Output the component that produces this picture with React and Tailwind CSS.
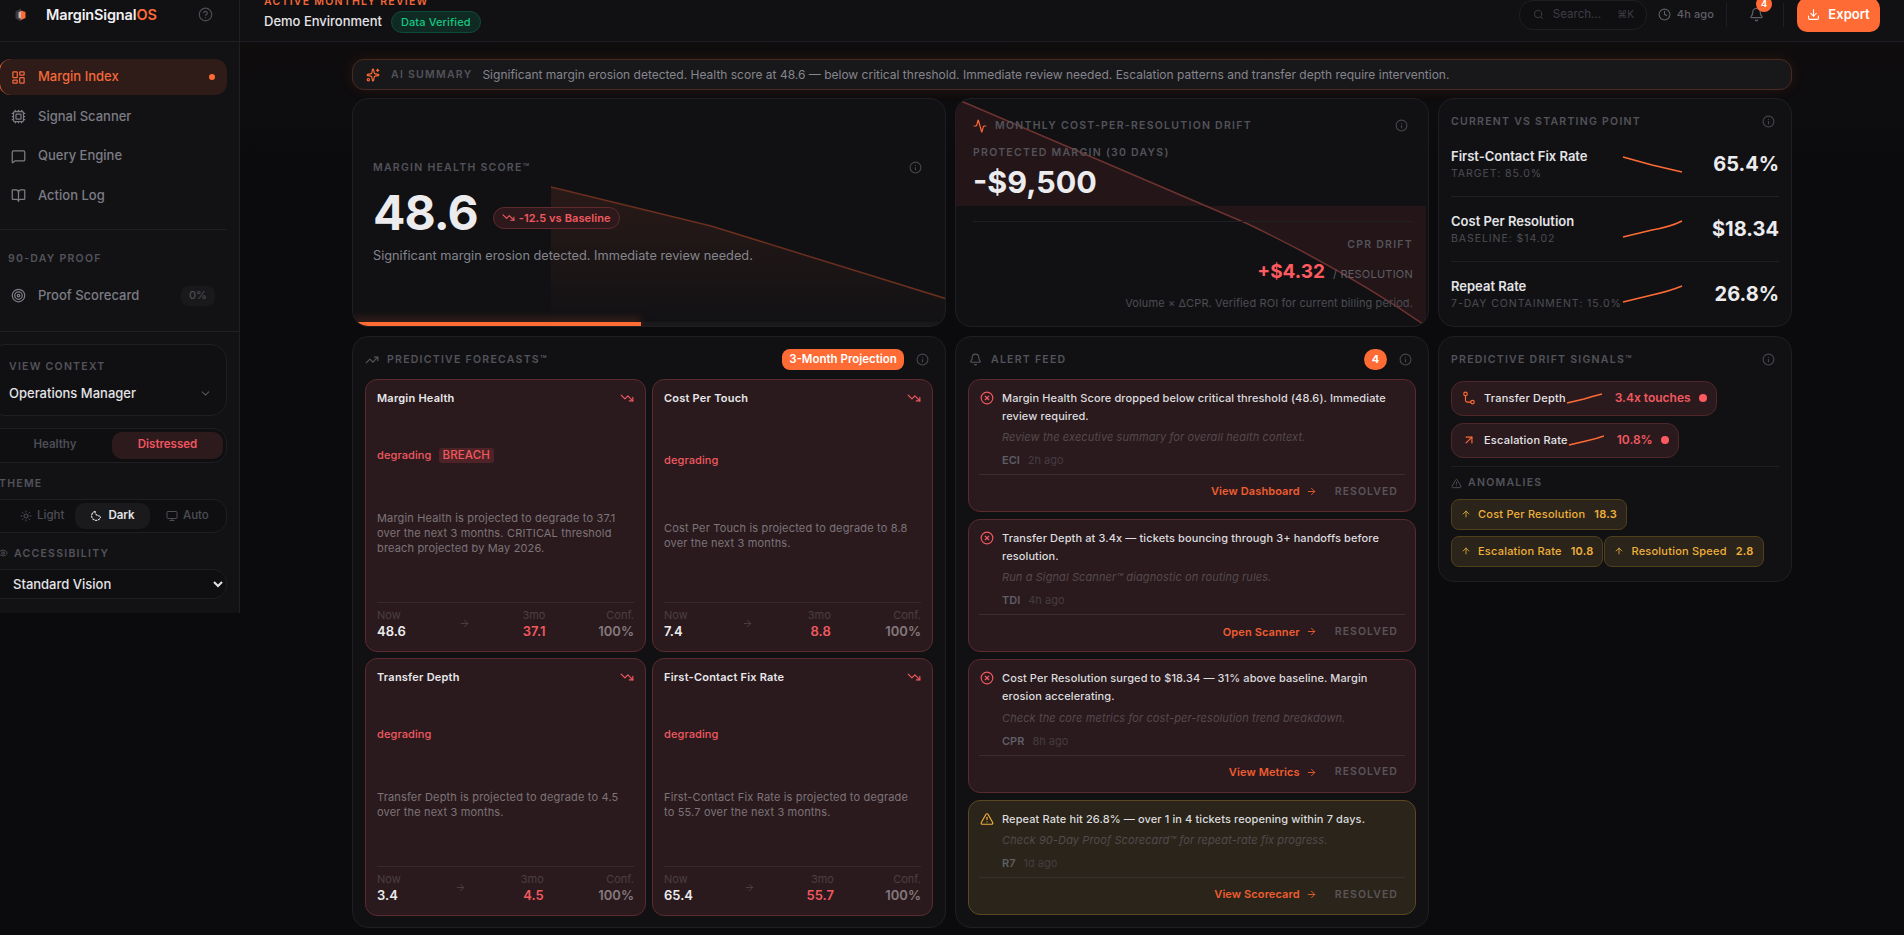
import {
  Activity, AlertTriangle, ArrowRight, ArrowUp, ArrowUpRight, Bell, BookOpen, ChevronDown, CircleHelp,
  Clock, Cpu, Download, Eye, Info, LayoutDashboard, MessageSquare, Monitor, Search, Sparkles, Sun,
  Target, TrendingDown, TrendingUp, XCircle,
} from 'lucide-react';

const forecasts = [
  { title: 'Margin Health', breach: true, desc: 'Margin Health is projected to degrade to 37.1 over the next 3 months. CRITICAL threshold breach projected by May 2026.', now: '48.6', next: '37.1' },
  { title: 'Cost Per Touch', desc: 'Cost Per Touch is projected to degrade to 8.8 over the next 3 months.', now: '7.4', next: '8.8' },
  { title: 'Transfer Depth', desc: 'Transfer Depth is projected to degrade to 4.5 over the next 3 months.', now: '3.4', next: '4.5' },
  { title: 'First-Contact Fix Rate', desc: 'First-Contact Fix Rate is projected to degrade to 55.7 over the next 3 months.', now: '65.4', next: '55.7' },
];

const alerts = [
  { text: 'Margin Health Score dropped below critical threshold (48.6). Immediate review required.', hint: 'Review the executive summary for overall health context.', code: 'ECI', time: '2h ago', action: 'View Dashboard' },
  { text: 'Transfer Depth at 3.4x — tickets bouncing through 3+ handoffs before resolution.', hint: 'Run a Signal Scanner™ diagnostic on routing rules.', code: 'TDI', time: '4h ago', action: 'Open Scanner' },
  { text: 'Cost Per Resolution surged to $18.34 — 31% above baseline. Margin erosion accelerating.', hint: 'Check the core metrics for cost-per-resolution trend breakdown.', code: 'CPR', time: '8h ago', action: 'View Metrics' },
  { text: 'Repeat Rate hit 26.8% — over 1 in 4 tickets reopening within 7 days.', hint: 'Check 90-Day Proof Scorecard™ for repeat-rate fix progress.', code: 'R7', time: '1d ago', action: 'View Scorecard', warn: true },
];

const metrics = [
  { name: 'First-Contact Fix Rate', sub: 'Target: 85.0%', value: '65.4%', path: 'M1 2 L30 10 L60 17' },
  { name: 'Cost Per Resolution', sub: 'Baseline: $14.02', value: '$18.34', path: 'M1 17 L30 10 Q48 7 60 1' },
  { name: 'Repeat Rate', sub: '7-Day Containment: 15.0%', value: '26.8%', path: 'M1 17 L30 10 Q48 6 60 1' },
];

const Label = ({ children, className = '' }) => (
  <div className={`text-[10.5px] font-semibold uppercase tracking-[0.12em] text-[#53535a] ${className}`}>{children}</div>
);

const InfoIcon = () => <Info size={13} className="text-[#46464c] shrink-0" />;

const Logo = () => (
  <svg width="14" height="14" viewBox="0 0 14 14">
    <path d="M7 0.5 L1.5 3.5 V10.5 L7 13.5 Z" fill="#3a3a40" />
    <path d="M7 2.5 L11.5 4 V10 L7 12 Z" fill="#ff6b35" />
    <path d="M7 3 L4.5 4.5 V9.5 L7 11 Z" fill="#f2f2f2" opacity="0.7" />
  </svg>
);

const DarkIcon = () => (
  <svg width="12" height="12" viewBox="0 0 24 24" fill="none" stroke="#e4e4e7" strokeWidth="2.2" strokeLinecap="round">
    <path d="M10 3a9 9 0 1 0 11 11" strokeDasharray="3 3" />
    <path d="M10 3c0 5 4 9 9 9" strokeDasharray="3 3" />
  </svg>
);

const RouteIcon = () => (
  <svg width="14" height="14" viewBox="0 0 24 24" fill="none" stroke="#ff6b35" strokeWidth="2" strokeLinecap="round">
    <circle cx="6" cy="5" r="3" />
    <path d="M6 8v8a3 3 0 0 0 3 3h6" />
    <circle cx="18" cy="19" r="3" />
  </svg>
);

const NavItem = ({ icon: Icon, label, active }) => (
  <div className={`flex items-center h-9 pr-[12px] rounded-xl text-[13px] font-medium ${active ? 'pl-[11px] bg-[#2f1c18] text-[#f4683a] border-l border-[#f4683a]' : 'pl-[12px] text-[#7c7c84]'}`}>
    <Icon size={15} className="shrink-0" />
    <span className="ml-[12px]">{label}</span>
    {active && <span className="ml-auto w-[6px] h-[6px] rounded-full bg-[#ff6b35]" />}
  </div>
);

const Sidebar = () => (
  <aside className="w-[240px] h-[571px] shrink-0 bg-[#121215] border-r border-[#202024] pt-[17px]">
    <div className="-ml-px mr-[12px] flex flex-col gap-[3.5px]">
      <NavItem icon={LayoutDashboard} label="Margin Index" active />
      <NavItem icon={Cpu} label="Signal Scanner" />
      <NavItem icon={MessageSquare} label="Query Engine" />
      <NavItem icon={BookOpen} label="Action Log" />
    </div>
    <div className="mt-[15px] mr-[12px] border-t border-[#202024]" />
    <Label className="mt-[22px] ml-[8px] leading-[13px]">90-Day Proof</Label>
    <div className="mt-[13px] mr-[12px] flex items-center h-9 pl-[11px] pr-[12px] text-[13px] font-medium text-[#7c7c84]">
      <Target size={15} />
      <span className="ml-[12px]">Proof Scorecard</span>
      <span className="ml-auto w-[34px] h-5 flex items-center justify-center rounded-lg bg-[#19191c] text-[11px] text-[#4d4d53]">0%</span>
    </div>
    <div className="mt-[17px] border-t border-[#202024]" />
    <div className="mt-[12px] -ml-[12px] mr-[12px] flex flex-col">
      <div className="h-[72px] rounded-2xl border border-[#1f1f23] bg-[#101013] pl-[20px] pr-[14px] pt-[15px]">
        <Label className="leading-[13px]">View Context</Label>
        <div className="mt-[11px] flex items-center justify-between text-[13px] font-medium text-[#e4e4e7]">
          Operations Manager
          <ChevronDown size={13} className="text-[#55555c]" />
        </div>
      </div>
      <div className="mt-[12px] h-[35px] rounded-[14px] border border-[#1f1f23] bg-[#0f0f12] p-[3px] pl-[9px] flex text-[11.5px] font-semibold">
        <div className="w-[114px] flex items-center justify-center text-[#4d4d54]">Healthy</div>
        <div className="flex-1 flex items-center justify-center rounded-[10px] bg-[#2d1a1c] text-[#ef5560]">Distressed</div>
      </div>
      <Label className="mt-[14px] ml-[11px] leading-[13px]">Theme</Label>
      <div className="mt-[9px] h-[34px] rounded-[14px] border border-[#1f1f23] bg-[#0f0f12] p-[3px] pl-[12px] flex text-[11.5px] font-medium text-[#4d4d54]">
        <div className="w-[74px] pl-[19px] flex items-center gap-[5px]"><Sun size={12} />Light</div>
        <div className="w-[75px] flex items-center justify-center gap-[6px] rounded-[10px] bg-[#1a1a1d] text-[#e4e4e7] font-semibold"><DarkIcon />Dark</div>
        <div className="flex-1 pl-[16px] flex items-center gap-[5px]"><Monitor size={12} />Auto</div>
      </div>
      <div className="mt-[14px] ml-[10px] flex items-center gap-[6px] h-[13px]">
        <Eye size={10} className="text-[#53535a]" />
        <Label className="leading-[13px]">Accessibility</Label>
      </div>
      <select className="mt-[9px] h-[30px] w-full rounded-[14px] border border-[#1f1f23] bg-[#0f0f12] pl-[20px] text-[13px] font-medium text-[#e4e4e7] outline-none">
        <option>Standard Vision</option>
      </select>
    </div>
  </aside>
);

const Header = () => (
  <header className="h-[42px] shrink-0 flex bg-[#111114] border-b border-[#202024]">
    <div className="w-[240px] shrink-0 border-r border-[#202024] flex items-center pb-[12px] pl-[14px] pr-[26px]">
      <Logo />
      <div className="ml-[18px] text-[14.5px] font-semibold tracking-[-0.01em] text-[#f0f0f2]">MarginSignal<span className="text-[#ff6b35]">OS</span></div>
      <CircleHelp size={15} className="ml-auto text-[#4d4d53]" />
    </div>
    <div className="-mt-[5px] ml-[24px]">
      <div className="text-[10.5px] leading-[14px] font-semibold uppercase tracking-[0.12em] text-[#f4683a]">Active Monthly Review</div>
      <div className="mt-[2px] flex items-center gap-[9px]">
        <span className="text-[13px] font-medium text-[#e4e4e7]">Demo Environment</span>
        <span className="h-[22px] px-[9px] flex items-center rounded-full border border-[#0f4a38] bg-[#0e2a22] text-[11px] tracking-[0.01em] font-medium text-[#16c784]">Data Verified</span>
      </div>
    </div>
    <div className="ml-auto flex items-center pb-[12px] pr-[24px]">
      <div className="w-[128px] h-[30px] flex items-center rounded-[14px] border border-[#1f1f23] bg-[#0f0f12] pl-[13px] pr-[12px] text-[11.5px] text-[#3e3e44]">
        <Search size={11} />
        <span className="ml-[9px]">Search...</span>
        <span className="ml-auto text-[10px]">⌘K</span>
      </div>
      <Clock size={13} className="ml-[11px] text-[#5e5e65]" />
      <span className="ml-[6px] text-[11px] tracking-[0.01em] font-medium text-[#5e5e65]">4h ago</span>
      <div className="ml-[12px] w-px h-[24px] bg-[#202024]" />
      <div className="relative ml-[22px]">
        <Bell size={15} className="text-[#5e5e65]" />
        <span className="absolute -top-[11px] left-[7px] w-4 h-4 flex items-center justify-center rounded-full bg-[#ff6b35] text-[9px] font-bold text-white">4</span>
      </div>
      <div className="ml-[19px] w-px h-[24px] bg-[#202024]" />
      <button className="ml-[13px] w-[83px] h-[34px] flex items-center justify-center gap-[8px] rounded-[10px] bg-[#ff6b35] text-[13px] font-semibold text-white">
        <Download size={13} />Export
      </button>
    </div>
  </header>
);

const HealthCard = () => (
  <section className="relative h-[229px] overflow-hidden rounded-2xl border border-[#1f1f23] bg-[#111114] px-[20px] flex flex-col justify-center">
    <svg className="absolute inset-0" width="594" height="229" fill="none">
      <defs>
        <linearGradient id="healthFill" x1="0" y1="0" x2="0" y2="1">
          <stop offset="0" stopColor="#ff6b35" stopOpacity="0.1" />
          <stop offset="1" stopColor="#ff6b35" stopOpacity="0" />
        </linearGradient>
      </defs>
      <path d="M198 88 L358 127 L594 200 V229 H198 Z" fill="url(#healthFill)" />
      <path d="M198 88 L358 127 L594 200" stroke="#6a2f1e" strokeWidth="1.5" />
    </svg>
    <div className="relative">
      <div className="flex items-center justify-between">
        <Label>Margin Health Score™</Label>
        <span className="mr-[3px]"><InfoIcon /></span>
      </div>
      <div className="mt-[9px] flex items-center">
        <span className="text-[48px] leading-[58px] font-bold tracking-[-0.02em] text-[#ececee]">48.6</span>
        <span className="ml-[15px] mt-[9px] h-[22px] px-[8px] flex items-center gap-[4px] rounded-full border border-[#5e2a2e] bg-[#2d191c] text-[11px] tracking-[0.01em] font-semibold text-[#f2595f]">
          <TrendingDown size={13} />-12.5 vs Baseline
        </span>
      </div>
      <p className="mt-[4px] text-[12.75px] text-[#85858c]">Significant margin erosion detected. Immediate review needed.</p>
    </div>
    <div className="absolute left-0 right-0 bottom-0 h-[4px] bg-[#19191c]">
      <div className="w-[288px] h-full bg-[#ff6b35] shadow-[0_-2px_10px_rgba(255,107,53,0.35)]" />
    </div>
  </section>
);

const DriftCard = () => (
  <section className="relative h-[229px] overflow-hidden rounded-2xl border border-[#1f1f23] bg-[#111114] pl-[17px] pr-[15px] pt-[19px]">
    <svg className="absolute inset-0" width="474" height="229" fill="none">
      <path d="M5 2 L145 62 L292 125 Q390 172 470 227 V107 H0 V2 Z" fill="#ff4d4d" fillOpacity="0.08" />
      <path d="M5 2 L145 62 L292 125 Q390 172 470 227" stroke="#6e3230" strokeWidth="1.5" />
    </svg>
    <div className="relative">
      <div className="flex items-center">
        <Activity size={14} className="text-[#ff6b35]" />
        <Label className="ml-[8px]">Monthly Cost-Per-Resolution Drift</Label>
        <span className="ml-auto mr-[5px]"><InfoIcon /></span>
      </div>
      <Label className="mt-[12px] leading-[14px]">Protected Margin (30 Days)</Label>
      <div className="mt-[2px] text-[30.5px] leading-[40px] font-bold text-[#ececee]">-$9,500</div>
      <div className="mt-[19px] border-t border-[#202024] pt-[16px] flex flex-col items-end">
        <Label className="leading-[14px]">CPR Drift</Label>
        <div className="mt-[6px] flex items-baseline gap-[8px]">
          <span className="text-[19px] leading-[28px] font-bold text-[#ff5a5f]">+$4.32</span>
          <span className="text-[11px] tracking-[0.02em] text-[#5e5e65]">/ RESOLUTION</span>
        </div>
        <p className="mt-[9px] text-[11px] tracking-[0.01em] text-[#4d4d53]">Volume × ΔCPR. Verified ROI for current billing period.</p>
      </div>
    </div>
  </section>
);

const CurrentCard = () => (
  <section className="h-[229px] rounded-2xl border border-[#1f1f23] bg-[#111114] pl-[12px] pr-[12px] pt-[15px]">
    <div className="flex items-center justify-between pr-[4px]">
      <Label>Current vs Starting Point</Label>
      <InfoIcon />
    </div>
    <div className="mt-[2px] flex flex-col">
      {metrics.map((m, i) => (
        <div key={m.name} className={`relative h-[65px] flex items-center justify-between ${i < 2 ? 'border-b border-[#202024]' : ''}`}>
          <div>
            <div className="text-[13px] leading-[18px] font-semibold text-[#e4e4e7]">{m.name}</div>
            <div className="mt-[2px] text-[10.5px] leading-[14px] uppercase tracking-[0.09em] text-[#4d4d53]">{m.sub}</div>
          </div>
          <svg className="absolute left-[171px] top-[23px]" width="61" height="18" fill="none">
            <path d={m.path} stroke="#ff6b35" strokeWidth="1.5" />
          </svg>
          <div className="text-[20px] font-bold text-[#ececee]">{m.value}</div>
        </div>
      ))}
    </div>
  </section>
);

const ForecastCard = ({ f }) => (
  <div className="rounded-xl border border-[#5a2a2e] bg-[#2a1a1e] px-[11px] pt-[10px] pb-[11px] flex flex-col justify-between">
    <div className="flex items-center justify-between h-[16px]">
      <span className="text-[11px] tracking-[0.02em] font-semibold text-[#e8e8ea]">{f.title}</span>
      <TrendingDown size={14} className="text-[#f2595f]" />
    </div>
    <div className="-mt-[4px] mb-[2px] flex items-center gap-[7px] h-[16px] text-[11px] tracking-[0.01em] font-medium text-[#f2595f]">
      degrading
      {f.breach && <span className="h-[15px] px-[4px] flex items-center rounded-[3px] bg-[#4d2327] text-[11.5px]">BREACH</span>}
    </div>
    <p className="text-[11px] tracking-[0.015em] leading-[15px] text-[#7d7478]">{f.desc}</p>
    <div className="border-t border-[#3b282c] pt-[5px] flex items-center justify-between">
      <div>
        <div className="text-[11px] leading-[14px] text-[#4b3f43]">Now</div>
        <div className="text-[13px] leading-[18px] font-semibold text-[#ececee]">{f.now}</div>
      </div>
      <ArrowRight size={11} className="text-[#4b3f43]" />
      <div className="text-right">
        <div className="text-[11px] leading-[14px] text-[#4b3f43]">3mo</div>
        <div className="text-[13px] leading-[18px] font-semibold text-[#f2595f]">{f.next}</div>
      </div>
      <div className="text-right">
        <div className="text-[11px] leading-[14px] text-[#4b3f43]">Conf.</div>
        <div className="text-[13px] leading-[18px] font-semibold text-[#85797d]">100%</div>
      </div>
    </div>
  </div>
);

const ForecastPanel = () => (
  <section className="h-[592px] rounded-2xl border border-[#1f1f23] bg-[#111114] px-[12px] pt-[12px]">
    <div className="flex items-center h-[21px]">
      <TrendingUp size={14} className="text-[#55555c]" />
      <Label className="ml-[8px]">Predictive Forecasts™</Label>
      <span className="ml-auto h-[21px] w-[122px] flex items-center justify-center rounded-lg bg-[#ff6b35] text-[11.5px] font-semibold text-white">3-Month Projection</span>
      <span className="ml-[12px] mr-[4px]"><InfoIcon /></span>
    </div>
    <div className="mt-[9px] grid grid-cols-2 grid-rows-[273px_258px] gap-[6px]">
      {forecasts.map(f => <ForecastCard key={f.title} f={f} />)}
    </div>
  </section>
);

const AlertCard = ({ a }) => (
  <div className={`rounded-xl border px-[10px] pt-[10px] pb-[3px] ${a.warn ? 'border-[#5a4820] bg-[#2a241a]' : 'border-[#5a2a2e] bg-[#2a1a1e]'}`}>
    <div className="flex gap-[8px] pl-[1px]">
      {a.warn
        ? <AlertTriangle size={14} className="mt-[1px] shrink-0 text-[#f0b03a]" />
        : <XCircle size={14} className="mt-[1px] shrink-0 text-[#f2595f]" />}
      <div className="min-w-0">
        <p className="text-[11px] leading-[17.6px] tracking-[0.01em] font-medium text-[#dcdcde]">{a.text}</p>
        <p className="mt-[4px] text-[11px] leading-[16px] tracking-[0.01em] italic text-[#55494d]">{a.hint}</p>
        <div className="mt-[7px] flex gap-[8px] text-[11px] leading-[16px]">
          <span className="font-semibold text-[#5e5e65]">{a.code}</span>
          <span className="text-[#453c40]">{a.time}</span>
        </div>
      </div>
    </div>
    <div className="mt-[6px] border-t border-[#3b2c2e] h-[34px] flex items-center justify-end gap-[18px] pr-[7px]">
      <span className="flex items-center gap-[6px] text-[11px] tracking-[0.01em] font-semibold text-[#ef5d30]">{a.action}<ArrowRight size={11} /></span>
      <span className="text-[10.5px] font-semibold tracking-[0.1em] text-[#5b5458]">RESOLVED</span>
    </div>
  </div>
);

const AlertPanel = () => (
  <section className="h-[592px] rounded-2xl border border-[#1f1f23] bg-[#111114] px-[12px] pt-[12px]">
    <div className="flex items-center h-[21px] pl-[1px]">
      <Bell size={13} className="text-[#55555c]" />
      <Label className="ml-[9px]">Alert Feed</Label>
      <span className="ml-auto w-[23px] h-[21px] flex items-center justify-center rounded-full bg-[#ff6b35] text-[11px] font-bold text-white">4</span>
      <span className="ml-[12px] mr-[4px]"><InfoIcon /></span>
    </div>
    <div className="mt-[9px] flex flex-col gap-[7px]">
      {alerts.map(a => <AlertCard key={a.code} a={a} />)}
    </div>
  </section>
);

const DriftPill = ({ icon, label, value, path }) => (
  <div className="inline-flex self-start items-center h-[35px] pl-[10px] pr-[9px] rounded-xl border border-[#4f272b] bg-[#2a1a1e]">
    {icon}
    <span className="ml-[8px] text-[11px] tracking-[0.02em] font-medium text-[#e4e4e7]">{label}</span>
    <svg width="36" height="12" fill="none"><path d={path} stroke="#ff6b35" strokeWidth="1.5" /></svg>
    <span className="ml-[13px] text-[12px] font-semibold text-[#f2595f]">{value}</span>
    <span className="ml-[8px] w-2 h-2 rounded-full bg-[#ff5a5f]" />
  </div>
);

const Chip = ({ label, value }) => (
  <div className="h-[31px] flex items-center pl-[9px] pr-[9px] rounded-lg border border-[#4f3f1c] bg-[#2a241a] text-[11px] tracking-[0.02em] font-medium text-[#f0b03a]">
    <ArrowUp size={10} />
    <span className="ml-[7px]">{label}</span>
    <span className="ml-[9px] font-semibold">{value}</span>
  </div>
);

const SignalsPanel = () => (
  <section className="h-[246px] rounded-2xl border border-[#1f1f23] bg-[#111114] px-[12px] pt-[15px] flex flex-col">
    <div className="flex items-center justify-between pr-[4px]">
      <Label>Predictive Drift Signals™</Label>
      <InfoIcon />
    </div>
    <div className="mt-[13px] flex flex-col gap-[7px]">
      <DriftPill icon={<RouteIcon />} label="Transfer Depth" value="3.4x touches" path="M1 11 L18 7 Q28 4 36 2" />
      <DriftPill icon={<ArrowUpRight size={14} className="text-[#ff6b35]" />} label="Escalation Rate" value="10.8%" path="M1 11 L18 7 Q28 5 36 2" />
    </div>
    <div className="mt-[8px] border-t border-[#202024]" />
    <div className="mt-[10px] flex items-center gap-[6px] h-[13px]">
      <AlertTriangle size={11} className="text-[#4d4d53]" />
      <Label>Anomalies</Label>
    </div>
    <div className="mt-[9px] flex flex-wrap gap-x-[1px] gap-y-[6px]">
      <div className="w-full flex"><Chip label="Cost Per Resolution" value="18.3" /></div>
      <Chip label="Escalation Rate" value="10.8" />
      <Chip label="Resolution Speed" value="2.8" />
    </div>
  </section>
);

export default function App() {
  return (
    <div className="h-screen overflow-hidden flex flex-col bg-[#0b0b0e] antialiased font-['Inter',sans-serif]">
      <Header />
      <div className="flex flex-1 min-h-0">
        <Sidebar />
        <main className="flex-1 min-w-0 pt-[17px] bg-[linear-gradient(#0f0d0e,#0b0b0e_120px)]">
          <div className="mx-auto w-[1440px]">
            <div className="h-[31px] flex items-center rounded-xl border border-[#4a2a20] bg-[#18181b] pl-[13px] shadow-[0_0_14px_rgba(255,107,53,0.1)]">
              <Sparkles size={14} className="text-[#ff6b35]" />
              <Label className="ml-[11px]">AI Summary</Label>
              <span className="ml-[10px] text-[12px] text-[#85858c]">Significant margin erosion detected. Health score at 48.6 — below critical threshold. Immediate review needed. Escalation patterns and transfer depth require intervention.</span>
            </div>
            <div className="mt-[8px] grid grid-cols-[594px_474px_354px] gap-x-[9px] gap-y-[9px] items-start">
              <HealthCard />
              <DriftCard />
              <CurrentCard />
              <ForecastPanel />
              <AlertPanel />
              <SignalsPanel />
            </div>
          </div>
        </main>
      </div>
    </div>
  );
}
